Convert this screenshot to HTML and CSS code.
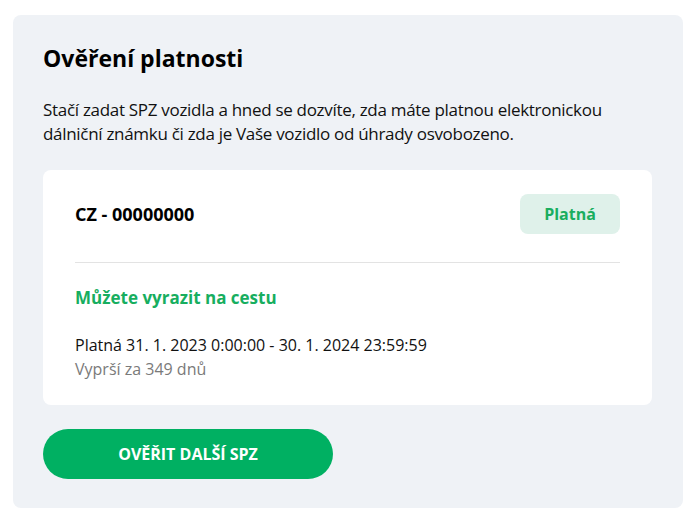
FILE: index.html
```html
<!DOCTYPE html>
<html lang="cs">
<head>
<meta charset="utf-8">
<link rel="stylesheet" href="styles.css">
</head>
<body>
<section class="panel">
  <h1 class="title">Ověření platnosti</h1>
  <p class="intro">Stačí zadat SPZ vozidla a hned se dozvíte, zda máte platnou elektronickou dálniční známku či zda je Vaše vozidlo od úhrady osvobozeno.</p>
  <div class="result">
    <div class="result-head">
      <span class="plate">CZ - 00000000</span>
      <span class="badge">Platná</span>
    </div>
    <div class="divider"></div>
    <div class="ok">Můžete vyrazit na cestu</div>
    <div class="validity">Platná 31. 1. 2023 0:00:00 - 30. 1. 2024 23:59:59</div>
    <div class="expires">Vyprší za 349 dnů</div>
  </div>
  <button class="again">OVĚŘIT DALŠÍ SPZ</button>
</section>
</body>
</html>
```

FILE: styles.css
```css
html, body {
  margin: 0;
  padding: 0;
  background: #ffffff;
}
body {
  padding: 15px 8px 0 13px;
  font-family: "Open Sans", "Noto Sans", sans-serif;
  color: #111;
}
.panel {
  background: #eff2f6;
  border-radius: 8px;
  padding: 28px 31px 29px 30px;
  height: 493px;
  box-sizing: border-box;
}
.title {
  margin: 0;
  font-size: 23px;
  font-weight: 700;
  line-height: 30px;
  color: #000;
}
.intro {
  margin: 25px 0 0;
  font-size: 17px;
  line-height: 24px;
  letter-spacing: -0.3px;
  color: #111;
}
.result {
  margin-top: 24px;
  background: #fff;
  border-radius: 8px;
  padding: 24px 32px;
  height: 235px;
  box-sizing: border-box;
}
.result-head {
  display: flex;
  justify-content: space-between;
  align-items: center;
}
.plate {
  font-size: 18px;
  font-weight: 700;
  color: #000;
}
.badge {
  width: 100px;
  height: 40px;
  border-radius: 8px;
  background: #dff1ea;
  color: #1aae5f;
  font-size: 16px;
  font-weight: 700;
  display: flex;
  align-items: center;
  justify-content: center;
}
.divider {
  height: 1px;
  background: #e3e3e3;
  margin-top: 28px;
}
.ok {
  margin-top: 23px;
  color: #17ae5f;
  font-size: 17px;
  font-weight: 700;
  line-height: 24px;
}
.validity {
  margin-top: 23px;
  font-size: 16px;
  line-height: 24px;
  color: #111;
}
.expires {
  font-size: 16px;
  line-height: 24px;
  color: #7a7a7a;
}
.again {
  margin-top: 24px;
  width: 290px;
  height: 50px;
  border: none;
  border-radius: 25px;
  background: #00b062;
  color: #fff;
  font-family: "Open Sans", "Noto Sans", sans-serif;
  font-size: 16px;
  font-weight: 700;
  display: block;
}
```
